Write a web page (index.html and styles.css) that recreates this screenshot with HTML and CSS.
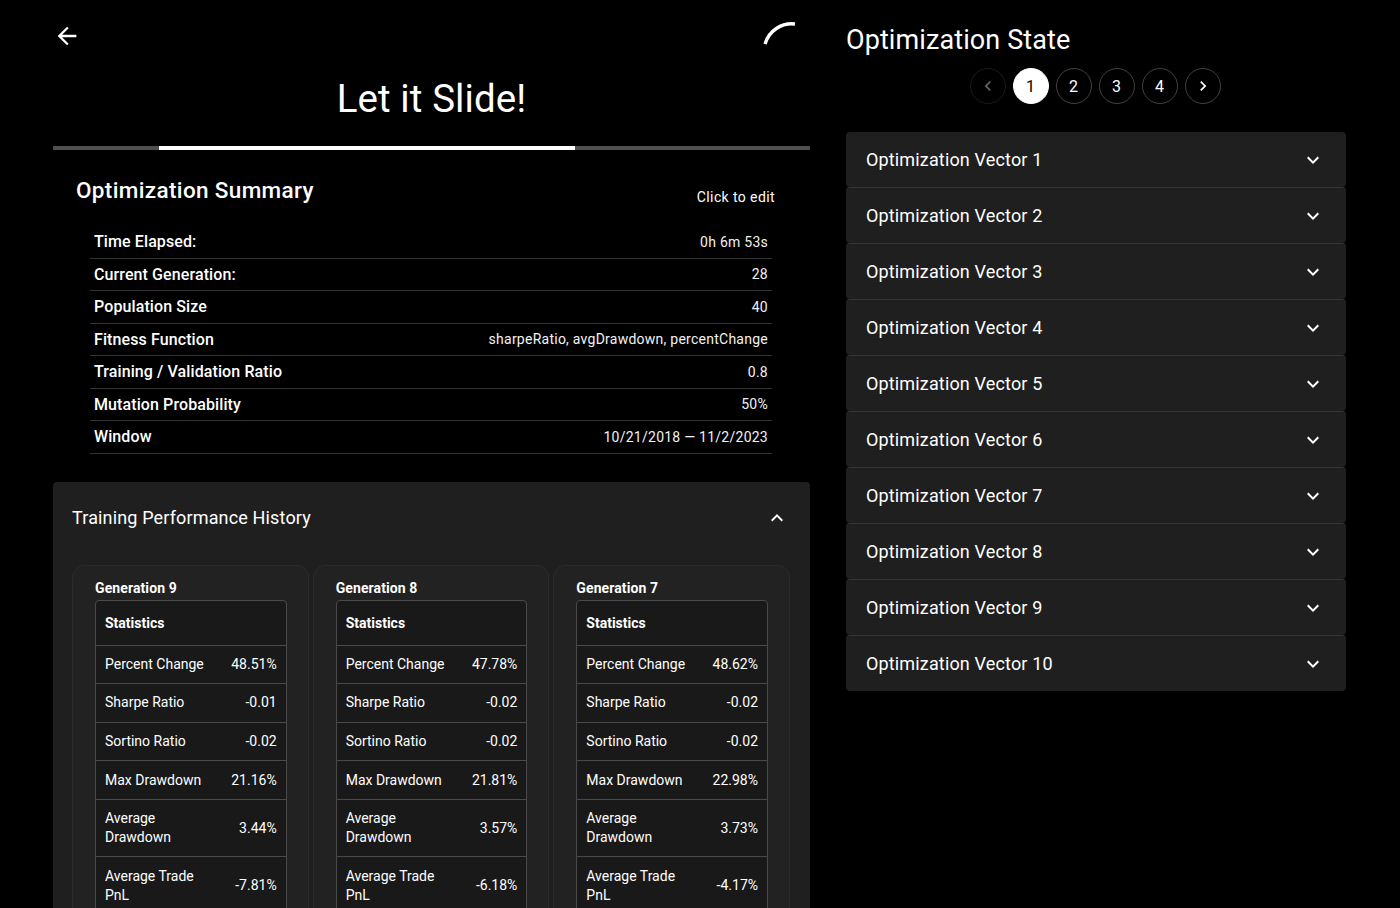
FILE: index.html
```html
<!DOCTYPE html>
<html lang="en">
<head>
<meta charset="utf-8">
<title>Let it Slide!</title>
<link rel="stylesheet" href="styles.css">
</head>
<body>
<div class="page">
  <main class="left">
    <header class="top">
      <div class="top-row">
        <svg class="back" viewBox="0 0 24 24" width="28" height="28"><path fill="#fff" d="M20 11H7.83l5.59-5.59L12 4l-8 8 8 8 1.41-1.41L7.83 13H20v-2z"/></svg>
        <svg class="spinner" viewBox="0 0 40 40" width="40" height="40"><path d="M5 28 A28 28 0 0 1 35 8" fill="none" stroke="#fff" stroke-width="3.4"/></svg>
      </div>
      <h1 class="title">Let it Slide!</h1>
    </header>
    <div class="progress"><div class="progress-fill" style="margin-left:106px;width:416px"></div></div>

    <section class="summary">
      <div class="summary-head">
        <h2 class="summary-title">Optimization Summary</h2>
        <span class="edit">Click to edit</span>
      </div>
      <div class="summary-table">
        <div class="srow"><span class="slabel">Time Elapsed:</span><span class="svalue">0h 6m 53s</span></div>
        <div class="srow"><span class="slabel">Current Generation:</span><span class="svalue">28</span></div>
        <div class="srow"><span class="slabel">Population Size</span><span class="svalue">40</span></div>
        <div class="srow"><span class="slabel">Fitness Function</span><span class="svalue">sharpeRatio, avgDrawdown, percentChange</span></div>
        <div class="srow"><span class="slabel">Training / Validation Ratio</span><span class="svalue">0.8</span></div>
        <div class="srow"><span class="slabel">Mutation Probability</span><span class="svalue">50%</span></div>
        <div class="srow"><span class="slabel">Window</span><span class="svalue">10/21/2018 — 11/2/2023</span></div>
      </div>
    </section>

    <section class="history">
      <div class="history-head">
        <span class="history-title">Training Performance History</span>
        <svg class="chev" viewBox="0 0 24 24" width="24" height="24"><path fill="#fff" d="M12 8l-6 6 1.41 1.41L12 10.83l4.59 4.58L18 14z"/></svg>
      </div>
      <div class="gens">
        <div class="gen">
          <div class="gen-title">Generation 9</div>
          <div class="stat-wrap">
            <table class="stats">
              <colgroup><col class="c1"><col class="c2"></colgroup>
              <thead><tr><th colspan="2">Statistics</th></tr></thead>
              <tbody>
                <tr><td>Percent Change</td><td class="v">48.51%</td></tr>
                <tr><td>Sharpe Ratio</td><td class="v">-0.01</td></tr>
                <tr><td>Sortino Ratio</td><td class="v">-0.02</td></tr>
                <tr><td>Max Drawdown</td><td class="v">21.16%</td></tr>
                <tr><td>Average Drawdown</td><td class="v">3.44%</td></tr>
                <tr><td>Average Trade PnL</td><td class="v">-7.81%</td></tr>
              </tbody>
            </table>
          </div>
        </div>
        <div class="gen">
          <div class="gen-title">Generation 8</div>
          <div class="stat-wrap">
            <table class="stats">
              <colgroup><col class="c1"><col class="c2"></colgroup>
              <thead><tr><th colspan="2">Statistics</th></tr></thead>
              <tbody>
                <tr><td>Percent Change</td><td class="v">47.78%</td></tr>
                <tr><td>Sharpe Ratio</td><td class="v">-0.02</td></tr>
                <tr><td>Sortino Ratio</td><td class="v">-0.02</td></tr>
                <tr><td>Max Drawdown</td><td class="v">21.81%</td></tr>
                <tr><td>Average Drawdown</td><td class="v">3.57%</td></tr>
                <tr><td>Average Trade PnL</td><td class="v">-6.18%</td></tr>
              </tbody>
            </table>
          </div>
        </div>
        <div class="gen">
          <div class="gen-title">Generation 7</div>
          <div class="stat-wrap">
            <table class="stats">
              <colgroup><col class="c1"><col class="c2"></colgroup>
              <thead><tr><th colspan="2">Statistics</th></tr></thead>
              <tbody>
                <tr><td>Percent Change</td><td class="v">48.62%</td></tr>
                <tr><td>Sharpe Ratio</td><td class="v">-0.02</td></tr>
                <tr><td>Sortino Ratio</td><td class="v">-0.02</td></tr>
                <tr><td>Max Drawdown</td><td class="v">22.98%</td></tr>
                <tr><td>Average Drawdown</td><td class="v">3.73%</td></tr>
                <tr><td>Average Trade PnL</td><td class="v">-4.17%</td></tr>
              </tbody>
            </table>
          </div>
        </div>
      </div>
    </section>
  </main>

  <aside class="right">
    <h2 class="state-title">Optimization State</h2>
    <nav class="pager">
      <span class="pg disabled"><svg viewBox="0 0 24 24" width="20" height="20"><path fill="currentColor" d="M15.41 7.41 14 6l-6 6 6 6 1.41-1.41L10.83 12z"/></svg></span>
      <span class="pg active">1</span>
      <span class="pg">2</span>
      <span class="pg">3</span>
      <span class="pg">4</span>
      <span class="pg"><svg viewBox="0 0 24 24" width="20" height="20"><path fill="currentColor" d="M10 6 8.59 7.41 13.17 12l-4.58 4.59L10 18l6-6z"/></svg></span>
    </nav>
    <div class="vectors">
      <div class="vec"><span>Optimization Vector 1</span><svg viewBox="0 0 24 24" width="24" height="24"><path fill="#fff" d="M16.59 8.59 12 13.17 7.41 8.59 6 10l6 6 6-6z"/></svg></div>
      <div class="vec"><span>Optimization Vector 2</span><svg viewBox="0 0 24 24" width="24" height="24"><path fill="#fff" d="M16.59 8.59 12 13.17 7.41 8.59 6 10l6 6 6-6z"/></svg></div>
      <div class="vec"><span>Optimization Vector 3</span><svg viewBox="0 0 24 24" width="24" height="24"><path fill="#fff" d="M16.59 8.59 12 13.17 7.41 8.59 6 10l6 6 6-6z"/></svg></div>
      <div class="vec"><span>Optimization Vector 4</span><svg viewBox="0 0 24 24" width="24" height="24"><path fill="#fff" d="M16.59 8.59 12 13.17 7.41 8.59 6 10l6 6 6-6z"/></svg></div>
      <div class="vec"><span>Optimization Vector 5</span><svg viewBox="0 0 24 24" width="24" height="24"><path fill="#fff" d="M16.59 8.59 12 13.17 7.41 8.59 6 10l6 6 6-6z"/></svg></div>
      <div class="vec"><span>Optimization Vector 6</span><svg viewBox="0 0 24 24" width="24" height="24"><path fill="#fff" d="M16.59 8.59 12 13.17 7.41 8.59 6 10l6 6 6-6z"/></svg></div>
      <div class="vec"><span>Optimization Vector 7</span><svg viewBox="0 0 24 24" width="24" height="24"><path fill="#fff" d="M16.59 8.59 12 13.17 7.41 8.59 6 10l6 6 6-6z"/></svg></div>
      <div class="vec"><span>Optimization Vector 8</span><svg viewBox="0 0 24 24" width="24" height="24"><path fill="#fff" d="M16.59 8.59 12 13.17 7.41 8.59 6 10l6 6 6-6z"/></svg></div>
      <div class="vec"><span>Optimization Vector 9</span><svg viewBox="0 0 24 24" width="24" height="24"><path fill="#fff" d="M16.59 8.59 12 13.17 7.41 8.59 6 10l6 6 6-6z"/></svg></div>
      <div class="vec"><span>Optimization Vector 10</span><svg viewBox="0 0 24 24" width="24" height="24"><path fill="#fff" d="M16.59 8.59 12 13.17 7.41 8.59 6 10l6 6 6-6z"/></svg></div>
    </div>
  </aside>
</div>
</body>
</html>
```
FILE: styles.css
```css
* { box-sizing: border-box; }
html, body {
  margin: 0;
  background: #000;
  color: #fff;
  font-family: Roboto, "Noto Sans", "Liberation Sans", sans-serif;
  overflow: hidden;
  height: 908px;
}
.page {
  display: flex;
  align-items: flex-start;
  padding-left: 53px;
}
.left { width: 757px; flex: none; }
.right { width: 500px; flex: none; margin-left: 36px; }

/* header */
.top { padding-top: 22px; }
.top-row {
  height: 28px;
  display: flex;
  align-items: center;
  justify-content: space-between;
}
.back { display: block; }
.spinner { display: block; margin: -6px 10px -6px 0; }
.title {
  margin: 25px 0 23px;
  font-size: 38.5px;
  font-weight: 400;
  line-height: 48px;
  text-align: center;
  letter-spacing: 0.1px;
}
.progress {
  height: 4px;
  background: #4f4f4f;
  display: flex;
}
.progress-fill { height: 4px; background: #fff; }

/* summary */
.summary-head {
  display: flex;
  justify-content: space-between;
  align-items: flex-start;
  padding: 0 35px 0 23px;
  margin-top: 25px;
}
.summary-title {
  margin: 0;
  font-size: 22.5px;
  font-weight: 500;
  line-height: 30px;
  letter-spacing: 0.35px;
}
.edit {
  margin-top: 12px;
  font-size: 14px;
  line-height: 20px;
  letter-spacing: 0.4px;
}
.summary-table { margin: 19px 38px 0 37px; }
.srow {
  height: 32.5px;
  display: flex;
  align-items: center;
  justify-content: space-between;
  padding: 0 4px;
  border-bottom: 1px solid #333;
}
.slabel { font-size: 16px; font-weight: 500; letter-spacing: 0.1px; }
.svalue { font-size: 14px; letter-spacing: 0.25px; color: #f2f2f2; }

/* history */
.history {
  margin-top: 28px;
  background: #1f1f1f;
  border-radius: 4px;
  padding-bottom: 24px;
}
.history-head {
  height: 72px;
  display: flex;
  align-items: center;
  justify-content: space-between;
  padding: 0 21px 0 19px;
}
.history-title { font-size: 18px; letter-spacing: 0.15px; }
.chev { display: block; }
.gens {
  display: grid;
  grid-template-columns: repeat(3, 1fr);
  gap: 4px;
  margin: 11px 20px 0 19px;
}
.gen {
  background: #222;
  border: 1px solid #2b2b2b;
  border-radius: 12px;
  padding: 12px 21px 20px 22px;
}
.gen-title {
  font-size: 14px;
  font-weight: 700;
  line-height: 20px;
  margin-bottom: 2px;
  letter-spacing: 0.1px;
}
.stat-wrap {
  border: 1px solid #4a4a4a;
  border-radius: 4px;
  overflow: hidden;
  background: #191919;
}
.stats {
  width: 100%;
  table-layout: fixed;
  border-collapse: collapse;
  font-size: 14px;
  letter-spacing: 0;
}
.c1 { width: 120px; }
.stats th {
  text-align: left;
  font-weight: 700;
  padding: 12px 9px;
  line-height: 20px;
  border-bottom: 1px solid #4a4a4a;
}
.stats td {
  padding: 9.3px 0 9.3px 9px;
  line-height: 19px;
  border-bottom: 1px solid #4a4a4a;
  vertical-align: middle;
}
.stats td.v { text-align: right; padding: 9.3px 9px 9.3px 0; }

/* right column */
.state-title {
  margin: 24px 0 0 0;
  font-size: 27px;
  font-weight: 400;
  line-height: 33px;
  letter-spacing: 0.1px;
}
.pager {
  display: flex;
  justify-content: center;
  gap: 7px;
  margin-top: 11px;
  padding-right: 2px;
}
.pg {
  width: 36px;
  height: 36px;
  border-radius: 50%;
  border: 1px solid rgba(255,255,255,0.25);
  display: flex;
  align-items: center;
  justify-content: center;
  font-size: 16px;
  color: #fff;
}
.pg svg { display: block; }
.pg.disabled { color: rgba(255,255,255,0.4); border-color: rgba(255,255,255,0.1); }
.pg.active { background: #fff; color: #000; border-color: #fff; }
.vectors { margin-top: 28px; }
.vec {
  height: 56px;
  background: #1f1f1f;
  border-radius: 4px;
  border-top: 1px solid #343434;
  display: flex;
  align-items: center;
  justify-content: space-between;
  padding: 0 21px 0 20px;
  font-size: 18px;
  letter-spacing: 0.15px;
}
.vec:first-child { border-top: 0; height: 55px; }
.vec svg { display: block; }
```
